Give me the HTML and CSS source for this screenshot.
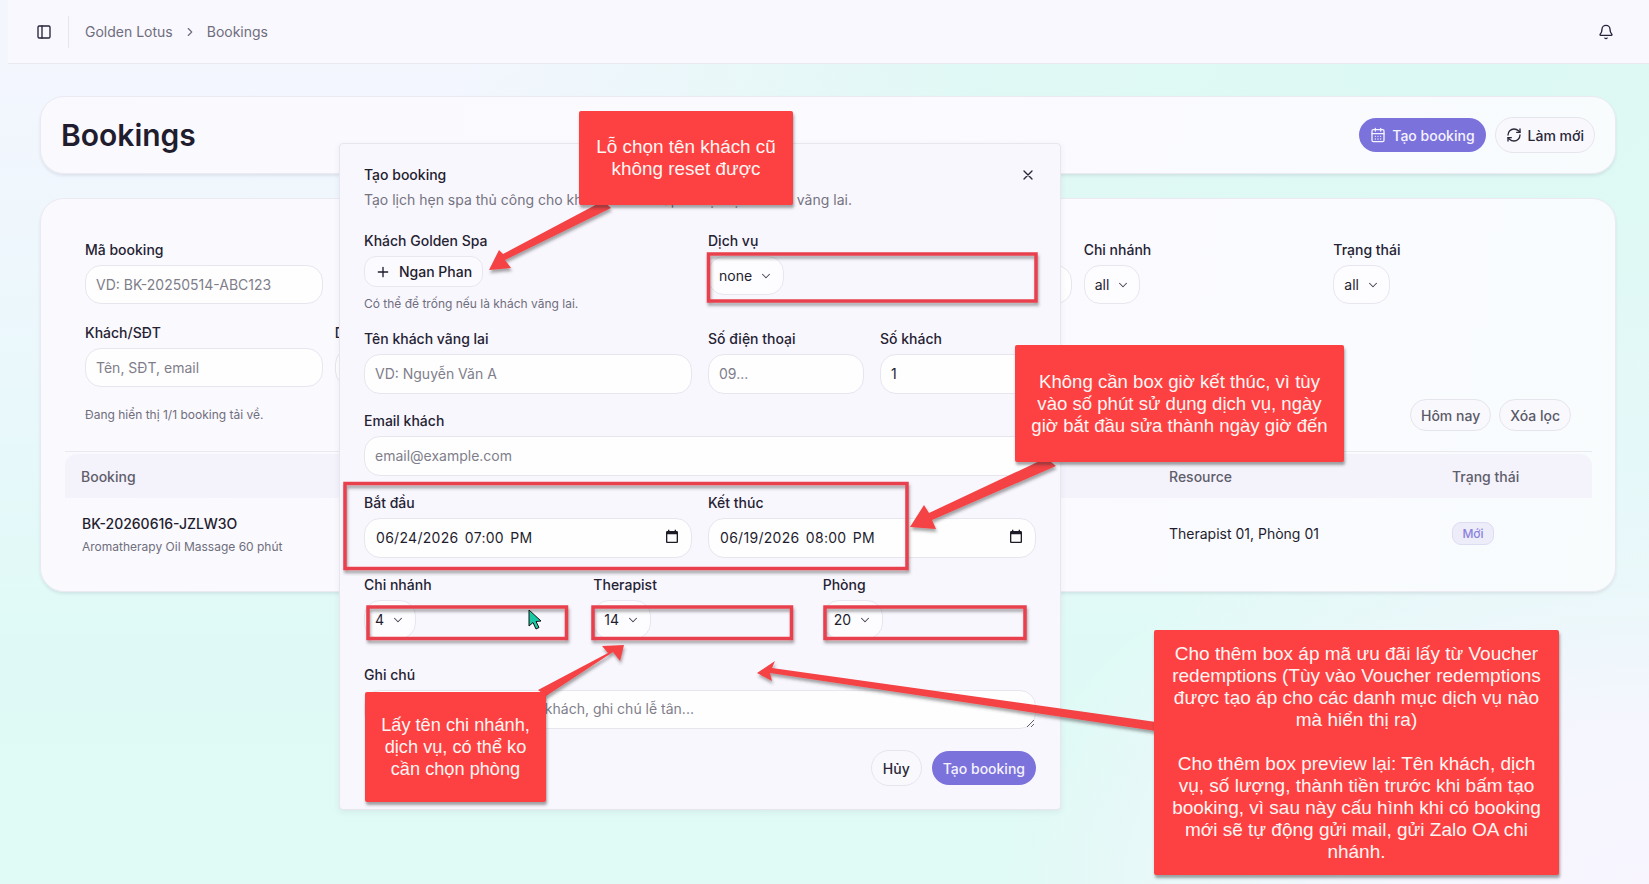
FILE: index.html
```html
<!DOCTYPE html>
<html lang="vi">
<head>
<meta charset="utf-8">
<title>Bookings</title>
<link rel="stylesheet" href="styles.css">
</head>
<body>
<div class="inset">
  <header class="topbar">
    <svg class="ic topbar-toggle" viewBox="0 0 24 24"><rect x="3" y="3" width="18" height="18" rx="2"/><path d="M9 3v18"/></svg>
    <span class="topbar-sep"></span>
    <nav class="crumbs">
      <span>Golden Lotus</span>
      <svg class="ic crumb-chev" viewBox="0 0 24 24"><path d="m9 18 6-6-6-6"/></svg>
      <span>Bookings</span>
    </nav>
    <svg class="ic bell" viewBox="0 0 24 24"><path d="M10.3 21a2 2 0 0 0 3.4 0"/><path d="M3.3 15.3A1 1 0 0 0 4 17h16a1 1 0 0 0 .7-1.7C19.400 14 18 12.500 18 8A6 6 0 0 0 6 8c0 4.500-1.400 6-2.700 7.300"/></svg>
  </header>

  <main class="content">
    <section class="card title-card">
      <h1>Bookings</h1>
      <div class="title-actions">
        <button class="btn btn-primary">
          <svg class="ic" viewBox="0 0 24 24"><path d="M8 2v4M16 2v4"/><rect x="3" y="4" width="18" height="18" rx="2"/><path d="M3 10h18M8 14h.01M12 14h.01M16 14h.01M8 18h.01M12 18h.01M16 18h.01"/></svg>
          Tạo booking
        </button>
        <button class="btn btn-outline">
          <svg class="ic" viewBox="0 0 24 24"><path d="M3 12a9 9 0 0 1 9-9 9.750 9.750 0 0 1 6.740 2.740L21 8"/><path d="M21 3v5h-5"/><path d="M21 12a9 9 0 0 1-9 9 9.750 9.750 0 0 1-6.740-2.740L3 16"/><path d="M8 16H3v5"/></svg>
          Làm mới
        </button>
      </div>
    </section>

    <section class="card filter-card">
      <div class="filters">
        <div class="field"><label>Mã booking</label><input class="input" placeholder="VD: BK-20250514-ABC123"></div>
        <div class="field"></div>
        <div class="field"></div>
        <div class="field"><label>&nbsp;</label><input class="input"></div>
        <div class="field"><label>Chi nhánh</label><button class="select">all<svg class="ic" viewBox="0 0 24 24"><path d="m6 9 6 6 6-6"/></svg></button></div>
        <div class="field"><label>Trạng thái</label><button class="select">all<svg class="ic" viewBox="0 0 24 24"><path d="m6 9 6 6 6-6"/></svg></button></div>
        <div class="field"><label>Khách/SĐT</label><input class="input" placeholder="Tên, SĐT, email"></div>
        <div class="field"><label>Dịch vụ</label><input class="input"></div>
      </div>
      <div class="filter-foot">
        <span class="hint">Đang hiển thị 1/1 booking tải về.</span>
        <div class="foot-actions">
          <button class="btn btn-outline btn-sm">Hôm nay</button>
          <button class="btn btn-outline btn-sm">Xóa lọc</button>
        </div>
      </div>
      <div class="table">
        <div class="row row-head">
          <span>Booking</span><span>Resource</span><span>Trạng thái</span>
        </div>
        <div class="row row-body">
          <div><div class="code">BK-20260616-JZLW3O</div><div class="hint">Aromatherapy Oil Massage 60 phút</div></div>
          <div class="resource">Therapist 01, Phòng 01</div>
          <div><span class="badge">Mới</span></div>
        </div>
      </div>
    </section>
  </main>
</div>

<div class="dialog">
  <div class="dialog-head">
    <h2>Tạo booking</h2>
    <p>Tạo lịch hẹn spa thủ công cho khách Golden Spa hoặc tạo khách vãng lai.</p>
    <svg class="ic dialog-close" viewBox="0 0 24 24"><path d="M18 6 6 18M6 6l12 12"/></svg>
  </div>
  <div class="form-2">
    <div class="field">
      <label>Khách Golden Spa</label>
      <button class="btn-guest"><svg class="ic" viewBox="0 0 24 24"><path d="M5 12h14M12 5v14"/></svg>Ngan Phan</button>
      <span class="hint hint-guest">Có thể để trống nếu là khách vãng lai.</span>
    </div>
    <div class="field">
      <label>Dịch vụ</label>
      <button class="select">none<svg class="ic" viewBox="0 0 24 24"><path d="m6 9 6 6 6-6"/></svg></button>
    </div>
    <div class="field"><label>Tên khách vãng lai</label><input class="input" placeholder="VD: Nguyễn Văn A"></div>
    <div class="form-2">
      <div class="field"><label>Số điện thoại</label><input class="input" placeholder="09..."></div>
      <div class="field"><label>Số khách</label><input class="input" value="1"></div>
    </div>
    <div class="field span-2"><label>Email khách</label><input class="input" placeholder="email@example.com"></div>
    <div class="field"><label>Bắt đầu</label>
      <div class="input date"><span>06/24/2026 07:00 PM</span><svg class="cal" viewBox="0 0 24 24"><path d="M19 3h-1V1h-2v2H8V1H6v2H5c-1.110 0-1.990.9-1.990 2L3 19c0 1.100.89 2 2 2h14c1.100 0 2-.9 2-2V5c0-1.100-.9-2-2-2zm0 16H5V8h14v11z"/></svg></div>
    </div>
    <div class="field"><label>Kết thúc</label>
      <div class="input date"><span>06/19/2026 08:00 PM</span><svg class="cal" viewBox="0 0 24 24"><path d="M19 3h-1V1h-2v2H8V1H6v2H5c-1.110 0-1.990.9-1.990 2L3 19c0 1.100.89 2 2 2h14c1.100 0 2-.9 2-2V5c0-1.100-.9-2-2-2zm0 16H5V8h14v11z"/></svg></div>
    </div>
  </div>
  <div class="form-3">
    <div class="field"><label>Chi nhánh</label><button class="select">4<svg class="ic" viewBox="0 0 24 24"><path d="m6 9 6 6 6-6"/></svg></button></div>
    <div class="field"><label>Therapist</label><button class="select">14<svg class="ic" viewBox="0 0 24 24"><path d="m6 9 6 6 6-6"/></svg></button></div>
    <div class="field"><label>Phòng</label><button class="select">20<svg class="ic" viewBox="0 0 24 24"><path d="m6 9 6 6 6-6"/></svg></button></div>
  </div>
  <div class="field note"><label>Ghi chú</label><textarea class="input textarea" placeholder="VD: Yêu cầu đặc biệt của khách, ghi chú lễ tân..."></textarea></div>
  <div class="dialog-foot">
    <button class="btn btn-outline btn-cancel">Hủy</button>
    <button class="btn btn-primary btn-submit">Tạo booking</button>
  </div>
</div>

<svg class="markup" viewBox="0 0 1649 884">
  <defs>
    <filter id="sh" x="-20%" y="-20%" width="140%" height="140%"><feDropShadow dx="1" dy="3" stdDeviation="1.500" flood-color="#3a3a3a" flood-opacity=".45"/></filter>
  </defs>
  <g fill="none" stroke="#e8404e" stroke-width="3.500" filter="url(#sh)">
    <rect x="708.500" y="254" width="327.500" height="47"/>
    <rect x="345" y="483.500" width="562" height="85"/>
    <rect x="368" y="607" width="198.500" height="31.500"/>
    <rect x="593" y="607" width="198.500" height="31.500"/>
    <rect x="825" y="607" width="200" height="31.500"/>
  </g>
  <g fill="#f44244" filter="url(#sh)">
    <path d="M603 201 L611 208 L505 260 L511 268 L489 270 L499 250 L503 254 Z"/>
    <path d="M1046 458 L1056 466 L932 520 L936 529 L910 527 L924 505 L929 513 Z"/>
    <path d="M538 690 L546 696 L613 652 L620 661 L624 645 L602 646 L608 653 Z"/>
    <path d="M1156 722 L1156 731 L770 673 L772 681 L757 673 L775 661 L772 668 Z"/>
  </g>
  <path class="cursor" d="M529 610 L529 626 L533 622.500 L536 629 L539 627.500 L536 621.500 L541 621 Z"/>
</svg>

<div class="note-box note-a">Lỗ chọn tên khách cũ<br>không reset được</div>
<div class="note-box note-b">Không cần box giờ kết thúc, vì tùy<br>vào số phút sử dụng dịch vụ, ngày<br>giờ bắt đầu sửa thành ngày giờ đến</div>
<div class="note-box note-c">Lấy tên chi nhánh,<br>dịch vụ, có thể ko<br>cần chọn phòng</div>
<div class="note-box note-d">Cho thêm box áp mã ưu đãi lấy từ Voucher<br>redemptions (Tùy vào Voucher redemptions<br>được tạo áp cho các danh mục dịch vụ nào<br>mà hiển thị ra)<br><br>Cho thêm box preview lại: Tên khách, dịch<br>vụ, số lượng, thành tiền trước khi bấm tạo<br>booking, vì sau này cấu hình khi có booking<br>mới sẽ tự động gửi mail, gửi Zalo OA chi<br>nhánh.</div>
</body>
</html>
```

FILE: styles.css
```css
* { box-sizing: border-box; }
html, body { height: 100%; }
body {
  margin: 0;
  height: 884px;
  overflow: hidden;
  position: relative;
  font-family: Inter, "Noto Sans", sans-serif;
  font-size: 14px;
  color: #1f1d2e;
  background:
    radial-gradient(650px 420px at 100% 100%, #f8f5ff 0%, rgba(248,245,255,.85) 40%, rgba(248,245,255,0) 100%),
    radial-gradient(1000px 460px at 88% 6%, #dcf9f3 0%, rgba(220,249,243,.8) 50%, rgba(220,249,243,0) 100%),
    linear-gradient(180deg, #f4f6fe 60px, #e8f8fb 430px, #dffaf6 640px, #e0faf5 884px);
}
button, input, textarea { font: inherit; color: inherit; }
.ic { width: 16px; height: 16px; fill: none; stroke: currentColor; stroke-width: 2; stroke-linecap: round; stroke-linejoin: round; flex: none; }

.inset { margin-left: 8px; }
.topbar {
  height: 64px;
  display: flex;
  align-items: center;
  padding: 0 35px 0 28px;
  background: #f9f8fe;
  border-bottom: 1px solid #e9e9ef;
}
.topbar-toggle { color: #25233a; margin-right: 16px; }
.topbar-sep { width: 1px; height: 32px; background: #e6e5ee; margin-right: 16px; }
.crumbs { display: flex; align-items: center; gap: 10px; color: #6f6e7c; }
.crumb-chev { width: 14px; height: 14px; }
.bell { margin-left: auto; color: #25233a; }

.content { padding: 32px 33px 0 32px; display: flex; flex-direction: column; gap: 24px; }
.card {
  background: linear-gradient(100deg, #faf9fe 0%, #fbfaff 60%, #f8fcfd 100%);
  border: 1px solid #ebeaf3;
  border-radius: 24px;
  box-shadow: 0 2px 3px rgba(60,60,90,.1);
}
.title-card { height: 78px; display: flex; align-items: center; justify-content: space-between; padding: 0 20px; }
h1 { margin: 0; font-size: 30px; font-weight: 600; }
.title-actions { display: flex; align-items: center; gap: 9px; }
.btn {
  display: inline-flex; align-items: center; gap: 6px;
  border-radius: 999px; border: 1px solid transparent;
  font-weight: 500; white-space: nowrap; padding: 0 10px;
}
.btn-primary { height: 34px; background: #7b72dc; color: #f5f3ff; }
.btn-outline { height: 36px; background: #f9f8fd; border-color: #e6e5ee; color: #2a2838; }
.btn-sm { height: 32px; padding: 0 10px; color: #5b5a68; }

.filter-card { height: 394px; padding: 42px 23px 0 24px; }
.filters {
  display: grid;
  grid-template-columns: repeat(6, 1fr);
  column-gap: 12px;
  row-gap: 20px;
  margin: 0 21px 0 20px;
}
.field { display: flex; flex-direction: column; align-items: flex-start; gap: 7px; min-width: 0; }
label { font-weight: 500; line-height: 17px; color: #252333; }
.input {
  width: 100%;
  height: 40px;
  border: 1px solid #e7e6ef;
  border-radius: 16px;
  background: #fefeff;
  padding: 0 10px;
  outline: none;
}
.dialog .input { padding-bottom: 2px; }
.input::placeholder { color: #7f7e8a; opacity: 1; }
.filters .input { height: 39px; }
.filters .select { height: 39px; padding-right: 9px; }
.select {
  display: inline-flex; align-items: center; gap: 7px;
  height: 39px; padding: 0 10px;
  background: #fdfcff;
  border: 1px solid #e8e7f0;
  border-radius: 16px;
}
.select .ic { width: 14px; height: 14px; color: #44434e; stroke-width: 1.800; }
.hint { font-size: 12px; line-height: 16px; color: #6f6e7c; }
.hint-guest { margin-top: 2px; }
.filter-foot { display: flex; align-items: center; justify-content: space-between; margin: 12px 21px 0 20px; }
.foot-actions { display: flex; gap: 8px; }

.table { margin-top: 20px; border-top: 1px solid #e9e9ef; padding-top: 2px; }
.row { display: grid; grid-template-columns: 1088px 283px 1fr; padding: 0 16px; }
.row-head { height: 44px; align-items: center; background: #f4f2fb; border-radius: 12px 12px 0 0; font-weight: 500; color: #5f5e6c; }
.row-body { padding: 17px 16px 0 17px; grid-template-columns: 1087px 283px 1fr; align-items: start; }
.code { font-weight: 500; line-height: 18px; margin-bottom: 6px; }
.resource { margin-top: 10px; }
.badge {
  display: inline-block; margin-top: 7px; width: 42px; height: 23px; line-height: 21px;
  text-align: center; font-size: 12px; font-weight: 500;
  color: #8a82dc; background: #edecf9; border: 1px solid #dedcf3; border-radius: 9px;
}

.dialog {
  position: absolute;
  left: 339px; top: 143px;
  width: 722px; height: 667px;
  padding: 22px 24px 24px;
  background: #f9f7fe;
  border: 1px solid #e7e6ee;
  border-radius: 4px;
  box-shadow: 0 2px 6px rgba(60,60,90,.08);
}
.dialog-head { position: relative; margin-bottom: 24px; }
h2 { margin: 0; font-size: 14px; line-height: 17px; font-weight: 500; }
.dialog-head p { margin: 8px 0 0; line-height: 17px; color: #74737f; }
.dialog-close { position: absolute; right: 0; top: 1px; width: 16px; height: 16px; color: #2a2838; }
.form-2 { display: grid; grid-template-columns: 1fr 1fr; gap: 18px 16px; }
.span-2 { grid-column: span 2; }
.dialog .date { display: flex; align-items: center; justify-content: space-between; padding: 0 11px 2px 11px; word-spacing: 2px; letter-spacing: .3px; }
.cal { width: 16px; height: 16px; fill: #1d1c26; flex: none; }
.btn-guest {
  display: inline-flex; align-items: center; gap: 8px;
  height: 31px; padding: 0 10px; font-weight: 500;
  background: #fbfaff; border: 1px solid #e8e7f0; border-radius: 12px;
}
.form-3 { display: grid; grid-template-columns: repeat(3, 1fr); gap: 16px; margin-top: 18px; }
.note { margin-top: 27px; }
.dialog .textarea { height: 39px; padding: 9px 10px 0; resize: vertical; display: block; }
.dialog-foot { display: flex; justify-content: flex-end; align-items: center; gap: 10px; margin-top: 21px; }
.btn-cancel { padding: 0 11px; }
.btn-submit { padding: 0 10px; }

.markup { position: absolute; left: 0; top: 0; width: 1649px; height: 884px; pointer-events: none; }
.cursor { fill: #19c9a6; stroke: #111; stroke-width: 1; }

.note-box {
  position: absolute;
  background: #fd4142;
  color: #fff6f4;
  font-family: "Liberation Sans", Arial, sans-serif;
  font-size: 19px;
  line-height: 22px;
  text-align: center;
  border-radius: 2px;
  box-shadow: 1px 3px 3px rgba(50,50,50,.45);
  display: flex; align-items: center; justify-content: center;
}
.note-a { left: 579px; top: 111px; width: 214px; height: 94px; font-size: 18.900px; }
.note-b { left: 1015px; top: 345px; width: 329px; height: 117px; font-size: 18.600px; }
.note-c { left: 365px; top: 692px; width: 181px; height: 110px; font-size: 18.200px; }
.note-d { left: 1154px; top: 630px; width: 405px; height: 245px; }
```
